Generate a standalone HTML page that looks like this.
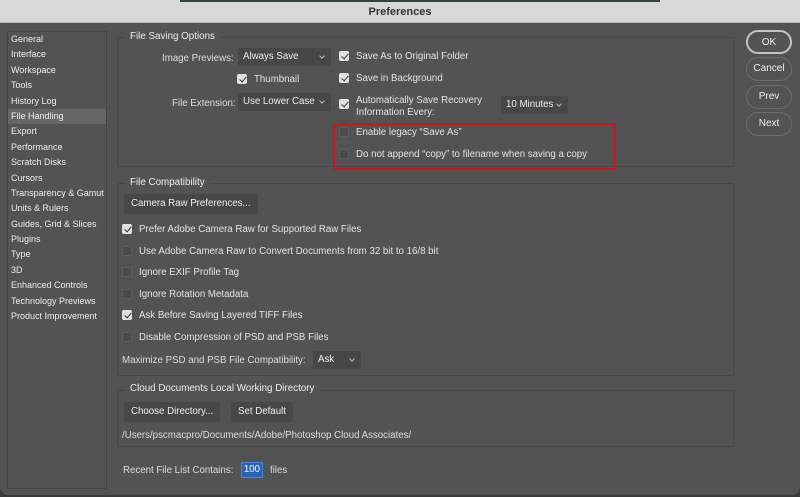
<!DOCTYPE html>
<html><head><meta charset="utf-8"><style>
*{box-sizing:border-box;margin:0;padding:0}
body{width:800px;height:497px;overflow:hidden;background:#3a3a3a;font-family:"Liberation Sans",sans-serif;font-size:9.7px;color:#e4e4e4;position:relative}
.a{position:absolute;white-space:nowrap}
.win{position:absolute;left:0;top:0;width:800px;height:495px;background:#535353;border-radius:0 0 8px 8px;overflow:hidden}
.title{position:absolute;left:0;top:0;width:800px;height:23px;background:#d8d8d8;border-bottom:1px solid #b8b8b8;text-align:center;font-weight:bold;color:#333;font-size:11px;line-height:24px}
.strip{position:absolute;left:180px;top:0;width:480px;height:2px;background:#2e4343}
.side{position:absolute;left:7px;top:31px;width:100px;height:458px;border:1px solid #444;background:#535353}
.side div{height:15.4px;line-height:15.4px;padding-left:3px;font-size:9px;color:#eee;white-space:nowrap;overflow:hidden}
.side .sel{background:#666}
.box{position:absolute;border:1px solid #474747;border-radius:2px}
.lg{position:absolute;background:#535353;padding:0 5px;font-size:9.8px;color:#eee}
.cb{position:absolute;width:10px;height:10px;border-radius:2px;background:#4a4a4a;border:1px solid #5e5e5e}
.cb.on{background:#e2e2e2;border-color:#e2e2e2}
.cb.on:after{content:"";position:absolute;left:2.5px;top:0px;width:3px;height:6px;border:solid #333;border-width:0 1.6px 1.6px 0;transform:rotate(40deg)}
.dd{position:absolute;background:#474747;border-radius:2px;height:18px;line-height:18px;padding-left:5px;color:#eee}
.dd:after{content:"";position:absolute;right:7px;top:6px;width:3px;height:3px;border:solid #bbb;border-width:0 1px 1px 0;transform:rotate(45deg)}
.btn{position:absolute;background:#474747;border-radius:2px;height:20px;line-height:20px;padding:0 7px;color:#eee}
.rb{position:absolute;left:746px;width:46px;height:24px;border:1.5px solid #6e6e6e;border-radius:12px;text-align:center;line-height:21px;color:#eee;font-size:10px}
</style></head><body>
<div class="win">
<div class="title">Preferences</div>
<div class="strip"></div>
<div class="side">
<div>General</div><div>Interface</div><div>Workspace</div><div>Tools</div><div>History Log</div><div class="sel">File Handling</div><div>Export</div><div>Performance</div><div>Scratch Disks</div><div>Cursors</div><div>Transparency &amp; Gamut</div><div>Units &amp; Rulers</div><div>Guides, Grid &amp; Slices</div><div>Plugins</div><div>Type</div><div>3D</div><div>Enhanced Controls</div><div>Technology Previews</div><div>Product Improvement</div>
</div>

<div class="box" style="left:117px;top:37px;width:617px;height:130px"></div>
<div class="lg" style="left:125px;top:31px">File Saving Options</div>
<div class="a" style="left:162px;top:53px;color:#ddd">Image Previews:</div>
<div class="dd" style="left:238px;top:48px;width:93px">Always Save</div>
<div class="cb on" style="left:237px;top:74px"></div><div class="a" style="left:254px;top:74px">Thumbnail</div>
<div class="a" style="left:172px;top:98px;color:#ddd">File Extension:</div>
<div class="dd" style="left:238px;top:93px;width:93px">Use Lower Case</div>
<div class="cb on" style="left:339px;top:51px"></div><div class="a" style="left:356px;top:51px">Save As to Original Folder</div>
<div class="cb on" style="left:339px;top:73px"></div><div class="a" style="left:356px;top:73px">Save in Background</div>
<div class="cb on" style="left:339px;top:99px"></div><div class="a" style="left:356px;top:95px;line-height:12px">Automatically Save Recovery<br>Information Every:</div>
<div class="dd" style="left:501px;top:96px;width:67px">10 Minutes</div>
<div class="cb" style="left:339px;top:127px"></div><div class="a" style="left:356px;top:127px">Enable legacy “Save As”</div>
<div class="cb" style="left:339px;top:149px"></div><div class="a" style="left:356px;top:149px">Do not append “copy” to filename when saving a copy</div>
<div class="a" style="left:333px;top:123px;width:283px;height:47px;border:2px solid #d0141b;border-radius:2px"></div>

<div class="box" style="left:117px;top:183px;width:617px;height:193px"></div>
<div class="lg" style="left:125px;top:177px">File Compatibility</div>
<div class="btn" style="left:124px;top:194px">Camera Raw Preferences...</div>
<div class="cb on" style="left:122px;top:224px"></div><div class="a" style="left:139px;top:224px">Prefer Adobe Camera Raw for Supported Raw Files</div>
<div class="cb" style="left:122px;top:246px"></div><div class="a" style="left:139px;top:246px">Use Adobe Camera Raw to Convert Documents from 32 bit to 16/8 bit</div>
<div class="cb" style="left:122px;top:267px"></div><div class="a" style="left:139px;top:267px">Ignore EXIF Profile Tag</div>
<div class="cb" style="left:122px;top:289px"></div><div class="a" style="left:139px;top:289px">Ignore Rotation Metadata</div>
<div class="cb on" style="left:122px;top:310px"></div><div class="a" style="left:139px;top:310px">Ask Before Saving Layered TIFF Files</div>
<div class="cb" style="left:122px;top:332px"></div><div class="a" style="left:139px;top:332px">Disable Compression of PSD and PSB Files</div>
<div class="a" style="left:122px;top:355px;color:#ddd">Maximize PSD and PSB File Compatibility:</div>
<div class="dd" style="left:313px;top:351px;width:48px">Ask</div>

<div class="box" style="left:117px;top:390px;width:617px;height:57px"></div>
<div class="lg" style="left:125px;top:383px">Cloud Documents Local Working Directory</div>
<div class="btn" style="left:124px;top:402px">Choose Directory...</div>
<div class="btn" style="left:231px;top:402px">Set Default</div>
<div class="a" style="left:122px;top:430px;color:#ddd">/Users/pscmacpro/Documents/Adobe/Photoshop Cloud Associates/</div>

<div class="a" style="left:123px;top:465px;color:#ddd">Recent File List Contains:</div>
<div class="a" style="left:241px;top:462px;width:22px;height:16px;background:#2a62b8;border:1px solid #4a86d8;color:#fff;line-height:14px;text-align:center">100</div>
<div class="a" style="left:270px;top:465px;color:#ddd">files</div>

<div class="rb" style="top:30px;border-color:#c4c4c4;border-width:2px">OK</div>
<div class="rb" style="top:57px">Cancel</div>
<div class="rb" style="top:85px">Prev</div>
<div class="rb" style="top:112px">Next</div>
</div>
</body></html>
